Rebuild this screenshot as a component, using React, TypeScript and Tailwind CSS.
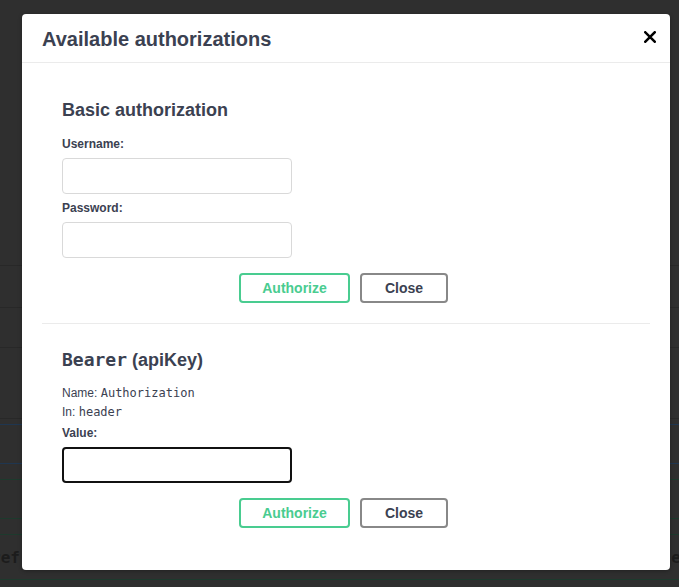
import React from "react";

const sans = { fontFamily: '"Liberation Sans", Arial, sans-serif' };
const mono = { fontFamily: '"DejaVu Sans Mono", monospace' };

function Buttons() {
  return (
    <div className="flex justify-center gap-[10px] pr-[5px]">
      <button className="h-[30px] w-[111px] rounded-[4px] border-2 border-[#49cc90] bg-white text-[14px] font-bold text-[#49cc90]">
        Authorize
      </button>
      <button className="h-[30px] w-[88px] rounded-[4px] border-2 border-[#888888] bg-white text-[14px] font-bold text-[#3b4151]">
        Close
      </button>
    </div>
  );
}

export default function App() {
  return (
    <div className="relative h-[587px] w-full overflow-hidden bg-[#2f2f2f]" style={sans}>
      <div className="flex flex-col">
        <div className="h-[266px] border-b border-[#282828]" />
        <div className="h-[42px] border-b border-[#282828]" />
        <div className="h-[40px] border-b border-[#282828]" />
        <div className="h-[71px] border-b border-[#282828]" />
        <div className="h-[6px] border-b border-[#1f3650]" />
        <div className="h-[39px] border-b border-[#1f3650]" />
        <div className="h-[16px] border-b border-[#1d3a2d]" />
        <div className="h-[39px] border-b border-[#1d3a2d]" />
        <div className="h-[16px] border-b border-[#1d3a2d]" />
        <div className="flex h-[45px] items-end justify-between border-b border-[#1d3a2d] pb-[13px]">
          <span className="ml-[-9px] text-[16px] font-bold leading-none text-[#1c1c1c]" style={mono}>ref</span>
          <span className="mr-[-2px] text-[16px] font-bold leading-none text-[#1c1c1c]" style={mono}>e</span>
        </div>
      </div>

      <div className="absolute left-[22px] top-[14px] w-[648px] rounded-[4px] bg-white shadow-[0_1px_4px_rgba(0,0,0,0.3)]">
        <div className="flex h-[49px] items-center justify-between border-b border-[#ebebeb] pl-[20px] pr-[14px]">
          <h3 className="mt-[2px] text-[20px] font-bold text-[#3b4151]">Available authorizations</h3>
          <svg width="12" height="12" viewBox="0 0 12 12" className="mt-[-3px]">
            <path d="M1.3 1.3 L10.7 10.7 M10.7 1.3 L1.3 10.7" stroke="#000" strokeWidth="2.5" strokeLinecap="square" />
          </svg>
        </div>

        <div className="px-[20px] pb-[42px]">
          <div className="border-b border-[#ebebeb] px-[20px] pb-[20px] pt-[35px]">
            <h4 className="text-[18px] font-bold leading-[24px] text-[#3b4151]">Basic authorization</h4>
            <div className="mt-[14px] text-[12px] font-bold leading-[16px] text-[#3b4151]">Username:</div>
            <input className="mt-[6px] block h-[36px] w-[230px] rounded-[4px] border border-[#d9d9d9] bg-white px-[10px] text-[14px] outline-none" />
            <div className="mt-[6px] text-[12px] font-bold leading-[16px] text-[#3b4151]">Password:</div>
            <input type="password" className="mt-[6px] block h-[36px] w-[230px] rounded-[4px] border border-[#d9d9d9] bg-white px-[10px] text-[14px] outline-none" />
            <div className="mt-[15px]">
              <Buttons />
            </div>
          </div>

          <div className="px-[20px] pt-[24px]">
            <h4 className="text-[18px] font-bold leading-[24px] text-[#3b4151]">
              <span style={mono}>Bearer</span> (apiKey)
            </h4>
            <div className="mt-[12px] text-[12px] leading-[19px] text-[#3b4151]">
              Name: <span style={mono}>Authorization</span>
            </div>
            <div className="text-[12px] leading-[19px] text-[#3b4151]">
              In: <span style={mono}>header</span>
            </div>
            <div className="mt-[3px] text-[12px] font-bold leading-[16px] text-[#3b4151]">Value:</div>
            <input className="mt-[6px] block h-[36px] w-[230px] rounded-[4px] border-2 border-[#111111] bg-white px-[10px] text-[14px] outline-none" />
            <div className="mt-[15px]">
              <Buttons />
            </div>
          </div>
        </div>
      </div>
    </div>
  );
}
